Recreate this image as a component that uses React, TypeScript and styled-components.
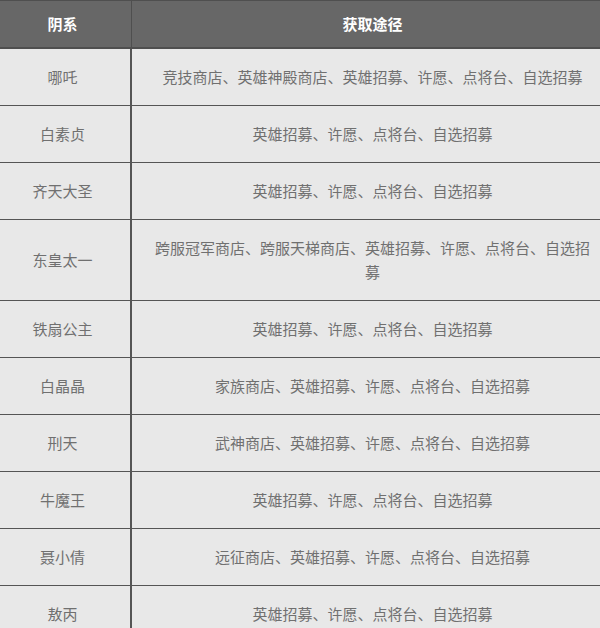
import React from "react";
import styled, { createGlobalStyle } from "styled-components";

const Global = createGlobalStyle`
  html, body {
    margin: 0;
    padding: 0;
    background: #ffffff;
    overflow: hidden;
  }
  body {
    font-family: "Noto Sans CJK SC", "Microsoft YaHei", sans-serif;
  }
`;

const Wrap = styled.div`
  width: 600px;
  overflow: hidden;
`;

const Table = styled.table`
  margin-left: -7px;
  width: 620px;
  border-collapse: collapse;
  table-layout: fixed;
  font-size: 15px;
  line-height: 24px;
`;

const Col = styled.col<{ $w: number }>`
  width: ${(p) => p.$w}px;
`;

const HeadCell = styled.th`
  background: #676767;
  color: #ffffff;
  font-weight: bold;
  text-align: center;
  padding: 11px 16px 11px;
  border: 1px solid #4f4f4f;
  border-bottom-width: 2px;
`;

const Cell = styled.td`
  background: #e8e8e8;
  color: #707070;
  text-align: center;
  padding: 16px 16px;
  border: 1px solid #555555;
  border-left-width: 2px;
  border-right-width: 2px;
`;

const rows: [string, string][] = [
  ["哪吒", "竞技商店、英雄神殿商店、英雄招募、许愿、点将台、自选招募"],
  ["白素贞", "英雄招募、许愿、点将台、自选招募"],
  ["齐天大圣", "英雄招募、许愿、点将台、自选招募"],
  ["东皇太一", "跨服冠军商店、跨服天梯商店、英雄招募、许愿、点将台、自选招募"],
  ["铁扇公主", "英雄招募、许愿、点将台、自选招募"],
  ["白晶晶", "家族商店、英雄招募、许愿、点将台、自选招募"],
  ["刑天", "武神商店、英雄招募、许愿、点将台、自选招募"],
  ["牛魔王", "英雄招募、许愿、点将台、自选招募"],
  ["聂小倩", "远征商店、英雄招募、许愿、点将台、自选招募"],
  ["敖丙", "英雄招募、许愿、点将台、自选招募"],
];

export default function App() {
  return (
    <Wrap>
      <Global />
      <Table>
        <colgroup>
          <Col $w={137} />
          <Col $w={483} />
        </colgroup>
        <thead>
          <tr>
            <HeadCell>阴系</HeadCell>
            <HeadCell>获取途径</HeadCell>
          </tr>
        </thead>
        <tbody>
          {rows.map(([name, way]) => (
            <tr key={name}>
              <Cell>{name}</Cell>
              <Cell>{way}</Cell>
            </tr>
          ))}
        </tbody>
      </Table>
    </Wrap>
  );
}
